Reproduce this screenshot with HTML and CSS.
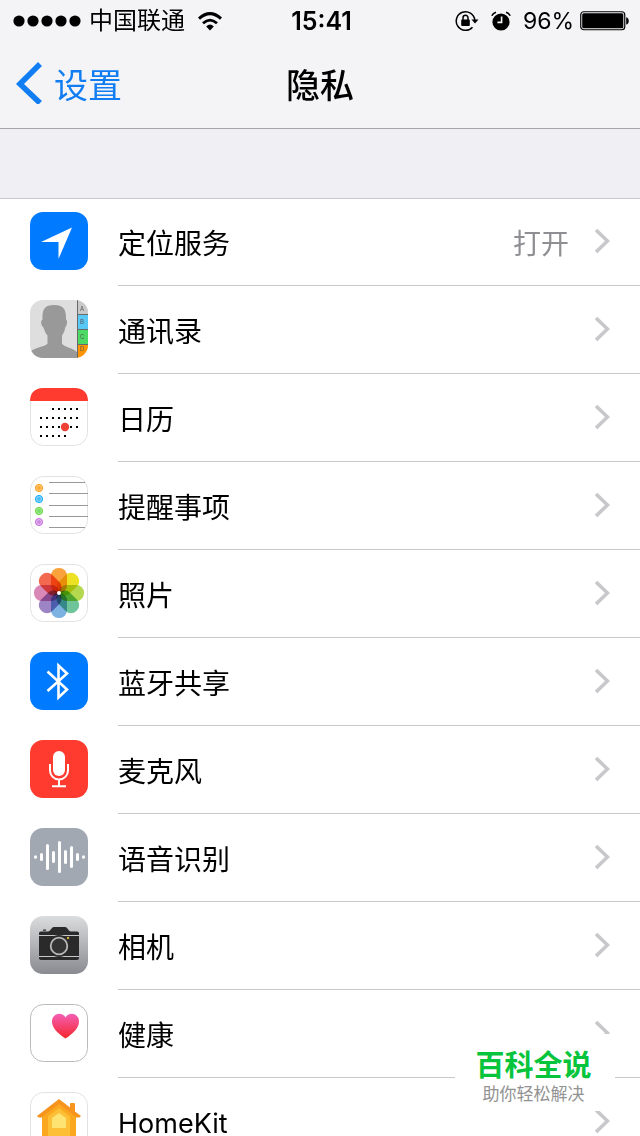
FILE: index.html
```html
<!DOCTYPE html>
<html lang="zh-CN">
<head>
<meta charset="utf-8">
<meta name="viewport" content="width=device-width, initial-scale=1">
<title>隐私</title>
<link rel="stylesheet" href="styles.css">
</head>
<body>
<svg class="defs" aria-hidden="true">
  <defs>
    <symbol id="chevron" viewBox="0 0 16 26"><path d="M2 1l11.500 11L2 23" fill="none" stroke="currentColor" stroke-width="3.600"/></symbol>
    <linearGradient id="camera-bg" x1="0" y1="0" x2="0" y2="1"><stop offset="0" stop-color="#dbdcdd"/><stop offset="1" stop-color="#898b91"/></linearGradient>
    <linearGradient id="heart-fill" x1="0" y1="0" x2="0" y2="1"><stop offset="0" stop-color="#f45fb4"/><stop offset="1" stop-color="#f5262b"/></linearGradient>
    <clipPath id="tile"><rect width="58" height="58" rx="13"/></clipPath>
  </defs>
</svg>
<header class="header">
  <div class="status">
    <div class="status-left">
      <svg width="68" height="12" viewBox="0 0 68 12" role="img" aria-label="信号"><circle cx="6" cy="6" r="5.600"/><circle cx="20" cy="6" r="5.600"/><circle cx="34" cy="6" r="5.600"/><circle cx="48" cy="6" r="5.600"/><circle cx="62" cy="6" r="5.600"/></svg>
      <span class="carrier">中国联通</span>
      <svg width="24" height="19" viewBox="0 0 24 19" role="img" aria-label="Wi-Fi"><path d="M1 6.600Q12-3.400 23 6.600" fill="none" stroke="#000" stroke-width="3"/><path d="M5 11.200q7-6.200 14 0" fill="none" stroke="#000" stroke-width="2.800"/><path d="M8.200 14.400q3.800-3.600 7.600 0L12 18.600z"/></svg>
    </div>
    <span class="clock">15:41</span>
    <div class="status-right">
      <svg width="24" height="22" viewBox="0 0 24 22" role="img" aria-label="方向锁定"><path d="M17.500 17.200A9.300 9.300 0 1 1 19.800 10" fill="none" stroke="#000" stroke-width="1.500"/><path d="M16.500 9.500h7l-3.500 4z"/><rect x="6.200" y="9.500" width="8.600" height="6.500" rx="1"/><path d="M8 10V7.700a2.500 2.500 0 0 1 5 0V10" fill="none" stroke="#000" stroke-width="1.500"/></svg>
      <svg class="alarm" width="20" height="20" viewBox="0 0 20 20" role="img" aria-label="闹钟"><circle cx="10" cy="11" r="8.600"/><path d="M.8 4.800Q2 2 5 1.200M19.200 4.800Q18 2 15 1.200" fill="none" stroke="#000" stroke-width="1.600"/><path d="M10.600 5.500v5.900H6.400" fill="none" stroke="#f4f4f6" stroke-width="1.600"/></svg>
      <span class="percent">96%</span>
      <svg width="50" height="20" viewBox="0 0 50 20" role="img" aria-label="电池"><rect x=".75" y=".75" width="44" height="18" rx="3" fill="none" stroke="#000" stroke-width="1.200"/><rect x="2.200" y="2.200" width="41.100" height="15.100" rx="1.500"/><path d="M46.200 6.200c3.400.6 3.400 6.800 0 7.400z"/></svg>
    </div>
  </div>
  <nav class="navbar">
    <a class="back" href="#settings"><svg width="26" height="42" viewBox="0 0 26 42" aria-hidden="true"><path d="M24 2L4 22 24 41" fill="none" stroke="currentColor" stroke-width="5.600"/></svg><span>设置</span></a>
    <h1 class="title">隐私</h1>
  </nav>
</header>
<main class="content">
  <ul class="list">
    <li><a class="row" href="#location">
      <svg class="icon" viewBox="0 0 58 58" aria-hidden="true"><rect width="58" height="58" rx="13" fill="#007aff"/><path d="M42 15.500L28.500 47V30H11z" fill="#fff"/></svg>
      <span class="cell"><span class="label">定位服务</span><span class="value">打开</span><svg class="arrow"><use href="#chevron"/></svg></span></a></li>
    <li><a class="row" href="#contacts">
      <svg class="icon" viewBox="0 0 58 58" aria-hidden="true"><g clip-path="url(#tile)"><rect width="58" height="58" fill="#dedede"/><path d="M0 58V52C5 47 16 46.500 17.500 43.500V35.500C14.500 32.500 14 27 12.500 26.500c-2-3-1.500-6 0-7C12 9 15 5 24 5s12.500 4 12 14.500c1.500 1 1.500 5-.5 7.500-.8 3-1.500 6-3.500 8.500v8C34 47 42 47.500 47 52v6z" fill="#999"/><rect x="47" width="11" height="14.500" fill="#c9c9c9"/><rect x="47" y="14.500" width="11" height="15" fill="#5ac8f5"/><rect x="47" y="29.500" width="11" height="15" fill="#4cd964"/><rect x="47" y="44.500" width="11" height="14" fill="#ff9500"/><path d="M47.500 0v58M47 14.500h11M47 29.500h11M47 44.500h11" stroke="#686868"/><g class="tabs"><text x="50" y="11">A</text><text x="50" y="24">B</text><text x="50" y="39">C</text><text x="50" y="51">D</text></g></g></svg>
      <span class="cell"><span class="label">通讯录</span><svg class="arrow"><use href="#chevron"/></svg></span></a></li>
    <li><a class="row" href="#calendar">
      <svg class="icon" viewBox="0 0 58 58" aria-hidden="true"><rect x=".5" y=".5" width="57" height="57" rx="13" fill="#fff" stroke="#e2e2e2"/><path d="M0 13C0 5 5 0 13 0h32c8 0 13 5 13 13z" fill="#ff3b30"/><path d="M22 21h26M10 30h38M10 39h38M10 48h26" stroke="#000" stroke-width="2" stroke-dasharray="2 4"/><circle cx="35" cy="39" r="4.200" fill="#ef4136"/></svg>
      <span class="cell"><span class="label">日历</span><svg class="arrow"><use href="#chevron"/></svg></span></a></li>
    <li><a class="row" href="#reminders">
      <svg class="icon" viewBox="0 0 58 58" aria-hidden="true"><rect x=".5" y=".5" width="57" height="57" rx="13" fill="#fff" stroke="#e2e2e2"/><path d="M19 6.500h36M19 17.500h39M19 29.500h39M19 40.500h39M19 51.500h36" stroke="#999"/><g fill-opacity=".8" stroke-width="1"><circle cx="9" cy="12" r="3.600" fill="#ff9500" stroke="#ff9f1c"/><circle cx="9" cy="23" r="3.600" fill="#1badf8" stroke="#1badf8"/><circle cx="9" cy="35" r="3.600" fill="#55d33b" stroke="#63da38"/><circle cx="9" cy="46" r="3.600" fill="#c06bd9" stroke="#cc73e1"/></g><g fill="none" stroke="#fff" stroke-opacity=".5" stroke-width=".8"><circle cx="9" cy="12" r="2.500"/><circle cx="9" cy="23" r="2.500"/><circle cx="9" cy="35" r="2.500"/><circle cx="9" cy="46" r="2.500"/></g></svg>
      <span class="cell"><span class="label">提醒事项</span><svg class="arrow"><use href="#chevron"/></svg></span></a></li>
    <li><a class="row" href="#photos">
      <svg class="icon" viewBox="0 0 58 58" aria-hidden="true"><rect x=".5" y=".5" width="57" height="57" rx="13" fill="#fff" stroke="#e2e2e2"/><g class="petals" transform="translate(29 29)"><rect x="-8" y="-25" width="16" height="25" rx="7.500" fill="#faa23c"/><rect x="-8" y="-25" width="16" height="25" rx="7.500" fill="#ece123" transform="rotate(45)"/><rect x="-8" y="-25" width="16" height="25" rx="7.500" fill="#b4d84e" transform="rotate(90)"/><rect x="-8" y="-25" width="16" height="25" rx="7.500" fill="#70c49a" transform="rotate(135)"/><rect x="-8" y="-25" width="16" height="25" rx="7.500" fill="#7bb2e2" transform="rotate(180)"/><rect x="-8" y="-25" width="16" height="25" rx="7.500" fill="#9d85c5" transform="rotate(225)"/><rect x="-8" y="-25" width="16" height="25" rx="7.500" fill="#d987b7" transform="rotate(270)"/><rect x="-8" y="-25" width="16" height="25" rx="7.500" fill="#f26950" transform="rotate(315)"/></g><circle cx="29" cy="29" r="2" fill="#fff"/></svg>
      <span class="cell"><span class="label">照片</span><svg class="arrow"><use href="#chevron"/></svg></span></a></li>
    <li><a class="row" href="#bluetooth">
      <svg class="icon" viewBox="0 0 58 58" aria-hidden="true"><rect width="58" height="58" rx="13" fill="#007aff"/><path d="M17.500 19.500L37 37.500 28.500 45.500V13.500L37 21.500 17.500 39" fill="none" stroke="#fff" stroke-width="2.600"/></svg>
      <span class="cell"><span class="label">蓝牙共享</span><svg class="arrow"><use href="#chevron"/></svg></span></a></li>
    <li><a class="row" href="#microphone">
      <svg class="icon" viewBox="0 0 58 58" aria-hidden="true"><rect width="58" height="58" rx="13" fill="#ff3b30"/><rect x="23" y="11" width="12" height="25" rx="6" fill="#fff"/><path d="M20 24v6.500a9 9 0 0 0 18 0V24M29 40v6M22 46.200h14" fill="none" stroke="#fff" stroke-width="2"/></svg>
      <span class="cell"><span class="label">麦克风</span><svg class="arrow"><use href="#chevron"/></svg></span></a></li>
    <li><a class="row" href="#speech">
      <svg class="icon" viewBox="0 0 58 58" aria-hidden="true"><rect width="58" height="58" rx="13" fill="#a2a8b2"/><path d="M5.500 28.800v.4M11.500 26.500v5M17.500 17.500v23M23.500 24.500v9M29.500 14.500v29M35.500 23.500v11M41.500 19.500v19M47.500 26.500v5M53.500 28.800v.4" fill="none" stroke="#fff" stroke-width="3" stroke-linecap="round"/></svg>
      <span class="cell"><span class="label">语音识别</span><svg class="arrow"><use href="#chevron"/></svg></span></a></li>
    <li><a class="row" href="#camera">
      <svg class="icon" viewBox="0 0 58 58" aria-hidden="true"><rect width="58" height="58" rx="13" fill="url(#camera-bg)"/><path d="M9 17q0-1.500 2-1.500h7c3 0 3-4.500 6-4.500h11c3 0 3 4.500 6 4.500h6q2 0 2 1.500v25q0 2-2 2H11q-2 0-2-2zM13 13.500h3v1.300h-3z" fill="#2a2a2b"/><path d="M9 19.500h40M9 40.500h40" stroke="#c6c7c8"/><circle cx="29" cy="30" r="11" fill="#2a2a2b"/><circle cx="29" cy="30" r="8.300" fill="#343435" stroke="#b7b8ba" stroke-width="1.800"/><circle cx="38" cy="22" r="1.200" fill="#d8b13e"/></svg>
      <span class="cell"><span class="label">相机</span><svg class="arrow"><use href="#chevron"/></svg></span></a></li>
    <li><a class="row" href="#health">
      <svg class="icon" viewBox="0 0 58 58" aria-hidden="true"><rect x=".5" y=".5" width="57" height="57" rx="13" fill="#fff" stroke="#bbb"/><path d="M35.500 34.500C27 29 22 23.500 22 17.500c0-8 10-10.500 13.500-4C39 7 49 9.500 49 17.500c0 6-5 11.500-13.500 17z" fill="url(#heart-fill)"/></svg>
      <span class="cell"><span class="label">健康</span><svg class="arrow"><use href="#chevron"/></svg></span></a></li>
    <li><a class="row" href="#homekit">
      <svg class="icon" viewBox="0 0 58 58" aria-hidden="true"><rect x=".5" y=".5" width="57" height="57" rx="13" fill="#fff" stroke="#e2e2e2"/><path d="M7 24L29 7l11 8.500V12q0-1 1-1h3q1 0 1 1v7.500l6 4.500-1.500 1.500H46V50H12V25.500H8.500z" fill="#f7941d"/><path d="M29 12L46 25v25H12V25z" fill="#fba820"/><path d="M29 16l11 8.500V44H18V24.500z" fill="#fcbf35"/><path d="M29 21l7 5v10H22V26z" fill="#fee272"/></svg>
      <span class="cell"><span class="label latin">HomeKit</span><svg class="arrow"><use href="#chevron"/></svg></span></a></li>
  </ul>
</main>
<aside class="badge"><strong>百科全说</strong><span>助你轻松解决</span></aside>
</body>
</html>
```

FILE: styles.css
```css
* { box-sizing: border-box; }
body {
  margin: 0;
  height: 100vh;
  display: flex;
  flex-direction: column;
  overflow: hidden;
  position: relative;
  background: #efeff4;
  color: #000;
  font-family: Inter, "Noto Sans CJK SC", sans-serif;
}
a { color: inherit; text-decoration: none; }
.defs { position: absolute; width: 0; height: 0; }
.header {
  flex: none;
  background: #f4f4f6;
  border-bottom: 1px solid #a5a5ad;
}
.status {
  display: grid;
  grid-template-columns: 1fr auto 1fr;
  align-items: center;
  height: 42px;
  padding: 0 10px 0 13px;
  font-size: 24px;
  line-height: 42px;
}
.status-left, .status-right { display: flex; align-items: center; }
.status-right { justify-content: flex-end; }
.carrier { margin: 0 13px 0 8px; }
.clock { font-size: 25px; font-weight: 600; }
.alarm { margin: 0 12px; }
.percent { margin-right: 6px; font-size: 23px; }
.navbar {
  display: grid;
  grid-template-columns: 1fr auto 1fr;
  align-items: center;
  height: 86px;
  padding: 0 16px 4px;
}
.back {
  display: flex;
  align-items: center;
  gap: 12px;
  color: #107df2;
  font-size: 34px;
}
.title { margin: 0; font-size: 34px; font-weight: 500; }
.content {
  flex: 1;
  min-height: 0;
  overflow-y: auto;
  scrollbar-width: none;
  padding-top: 69px;
}
.list {
  margin: 0;
  padding: 0;
  list-style: none;
  background: linear-gradient(#c8c7cc, #c8c7cc) top / 100% 1px no-repeat #fff;
}
.row {
  display: flex;
  gap: 30px;
  height: 88px;
  padding-left: 30px;
}
.icon { flex: none; width: 58px; height: 58px; margin-top: 14px; }
.cell {
  flex: 1;
  display: flex;
  align-items: center;
  padding-right: 30px;
  border-bottom: 1px solid #c8c7cc;
  font-size: 28px;
  line-height: 24px;
}
.label, .value { padding-top: 4px; }
.label { flex: 1; }
.latin { font-size: 27px; }
.value { margin-right: 25px; color: #8e8e93; }
.arrow { width: 16px; height: 26px; color: #c7c7cc; }
.petals rect { mix-blend-mode: multiply; }
.tabs { font-size: 6px; fill: #555; }
.badge {
  position: absolute;
  right: 25px;
  bottom: 25px;
  display: flex;
  flex-direction: column;
  align-items: center;
  width: 160px;
  height: 77px;
  padding: 16px 3px 0 0;
  background: #fff;
}
.badge strong { color: #06c53c; font-size: 29px; line-height: 32px; font-weight: 700; }
.badge span { color: #929292; font-size: 17px; line-height: 24px; }
```
